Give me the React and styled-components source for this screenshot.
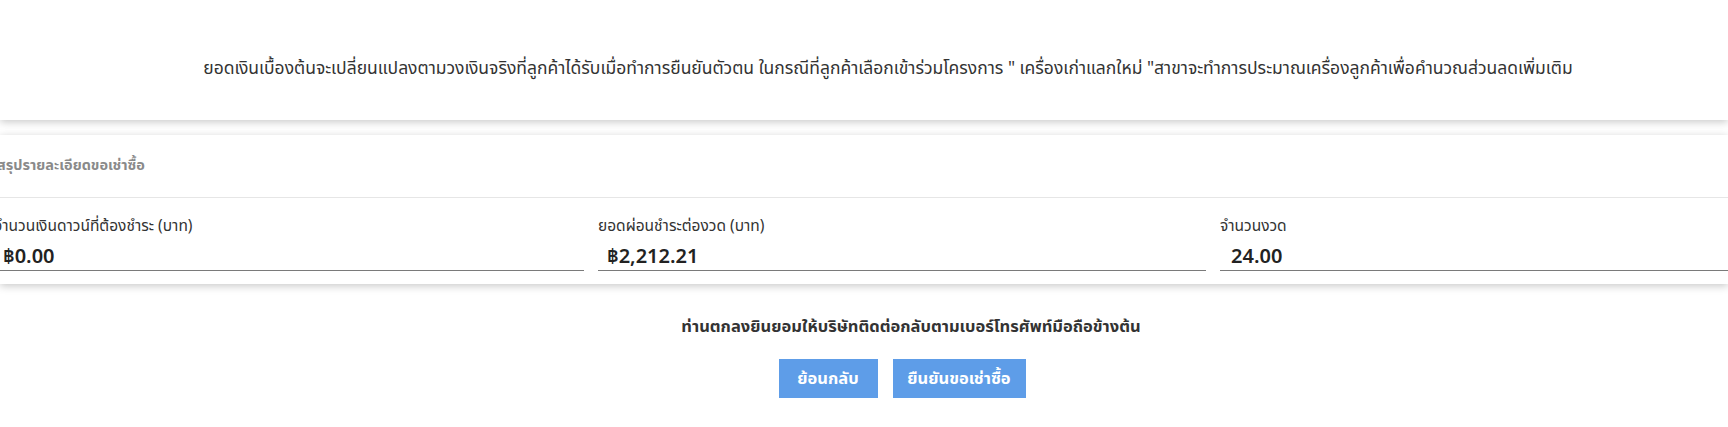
import React from "react";
import styled, { createGlobalStyle } from "styled-components";

const GlobalStyle = createGlobalStyle`
  html, body {
    margin: 0;
    padding: 0;
    background: #ffffff;
    overflow: hidden;
  }
  body {
    font-family: Tahoma, "Leelawadee UI", "Noto Sans Thai", "Noto Sans", "DejaVu Sans", sans-serif;
    color: #333333;
  }
`;

const Page = styled.div`
  width: 100%;
  display: flex;
  flex-direction: column;
`;

const Card = styled.section`
  background: #ffffff;
  box-shadow: 0 2px 8px rgba(0, 0, 0, 0.22);
`;

const NoticeCard = styled(Card)`
  height: 120px;
  box-sizing: border-box;
  padding: 57px 0 0 48px;
  display: flex;
  justify-content: center;
  position: relative;
  z-index: 1;
`;

const NoticeText = styled.p`
  margin: 0;
  font-size: 17.5px;
  line-height: 24px;
  color: #333333;
  white-space: nowrap;
`;

const SummaryCard = styled(Card)`
  margin-top: 15px;
  overflow: hidden;
`;

const CardHeader = styled.h3`
  margin: 0 0 0 -3px;
  height: 62px;
  display: flex;
  align-items: center;
  font-size: 14.5px;
  font-weight: bold;
  color: #8a8a8a;
  border-bottom: 1px solid #e6e6e6;
`;

const FieldGrid = styled.div`
  display: grid;
  grid-template-columns: 590px 608px 608px;
  column-gap: 14px;
  margin-left: -6px;
  padding: 19px 0 13px;
`;

const Field = styled.div`
  display: flex;
  flex-direction: column;
`;

const FieldLabel = styled.label`
  font-size: 15.5px;
  line-height: 20px;
  color: #333333;
  white-space: nowrap;
`;

const FieldValue = styled.div`
  margin-top: 7px;
  height: 26px;
  line-height: 26px;
  padding-left: ${(p) => p.$indent || 9}px;
  font-size: 20px;
  font-weight: 600;
  color: #222222;
  border-bottom: 1px solid #7a7a7a;
`;

const Consent = styled.p`
  margin: 31px 0 0;
  padding-left: 94px;
  text-align: center;
  font-size: 16.5px;
  line-height: 24px;
  font-weight: bold;
  color: #333333;
`;

const ButtonRow = styled.div`
  margin-top: 20px;
  padding-left: 76px;
  display: flex;
  justify-content: center;
  gap: 15px;
`;

const Button = styled.button`
  width: ${(p) => p.$w}px;
  height: 39px;
  padding: 0;
  border: none;
  border-radius: 0;
  background: #5e9de8;
  color: #ffffff;
  font-family: inherit;
  font-size: 16.5px;
  font-weight: bold;
  cursor: pointer;
`;

const fields = [
  { label: "จำนวนเงินดาวน์ที่ต้องชำระ (บาท)", value: "฿0.00" },
  { label: "ยอดผ่อนชำระต่องวด (บาท)", value: "฿2,212.21" },
  { label: "จำนวนงวด", value: "24.00", indent: 11 },
];

export default function App() {
  return (
    <>
      <GlobalStyle />
      <Page>
        <NoticeCard>
          <NoticeText>
            ยอดเงินเบื้องต้นจะเปลี่ยนแปลงตามวงเงินจริงที่ลูกค้าได้รับเมื่อทำการยืนยันตัวตน ในกรณีที่ลูกค้าเลือกเข้าร่วมโครงการ " เครื่องเก่าแลกใหม่ "สาขาจะทำการประมาณเครื่องลูกค้าเพื่อคำนวณส่วนลดเพิ่มเติม
          </NoticeText>
        </NoticeCard>
        <SummaryCard>
          <CardHeader>สรุปรายละเอียดขอเช่าซื้อ</CardHeader>
          <FieldGrid>
            {fields.map((f) => (
              <Field key={f.label}>
                <FieldLabel>{f.label}</FieldLabel>
                <FieldValue $indent={f.indent}>{f.value}</FieldValue>
              </Field>
            ))}
          </FieldGrid>
        </SummaryCard>
        <Consent>ท่านตกลงยินยอมให้บริษัทติดต่อกลับตามเบอร์โทรศัพท์มือถือข้างต้น</Consent>
        <ButtonRow>
          <Button $w={99}>ย้อนกลับ</Button>
          <Button $w={133}>ยืนยันขอเช่าซื้อ</Button>
        </ButtonRow>
      </Page>
    </>
  );
}
